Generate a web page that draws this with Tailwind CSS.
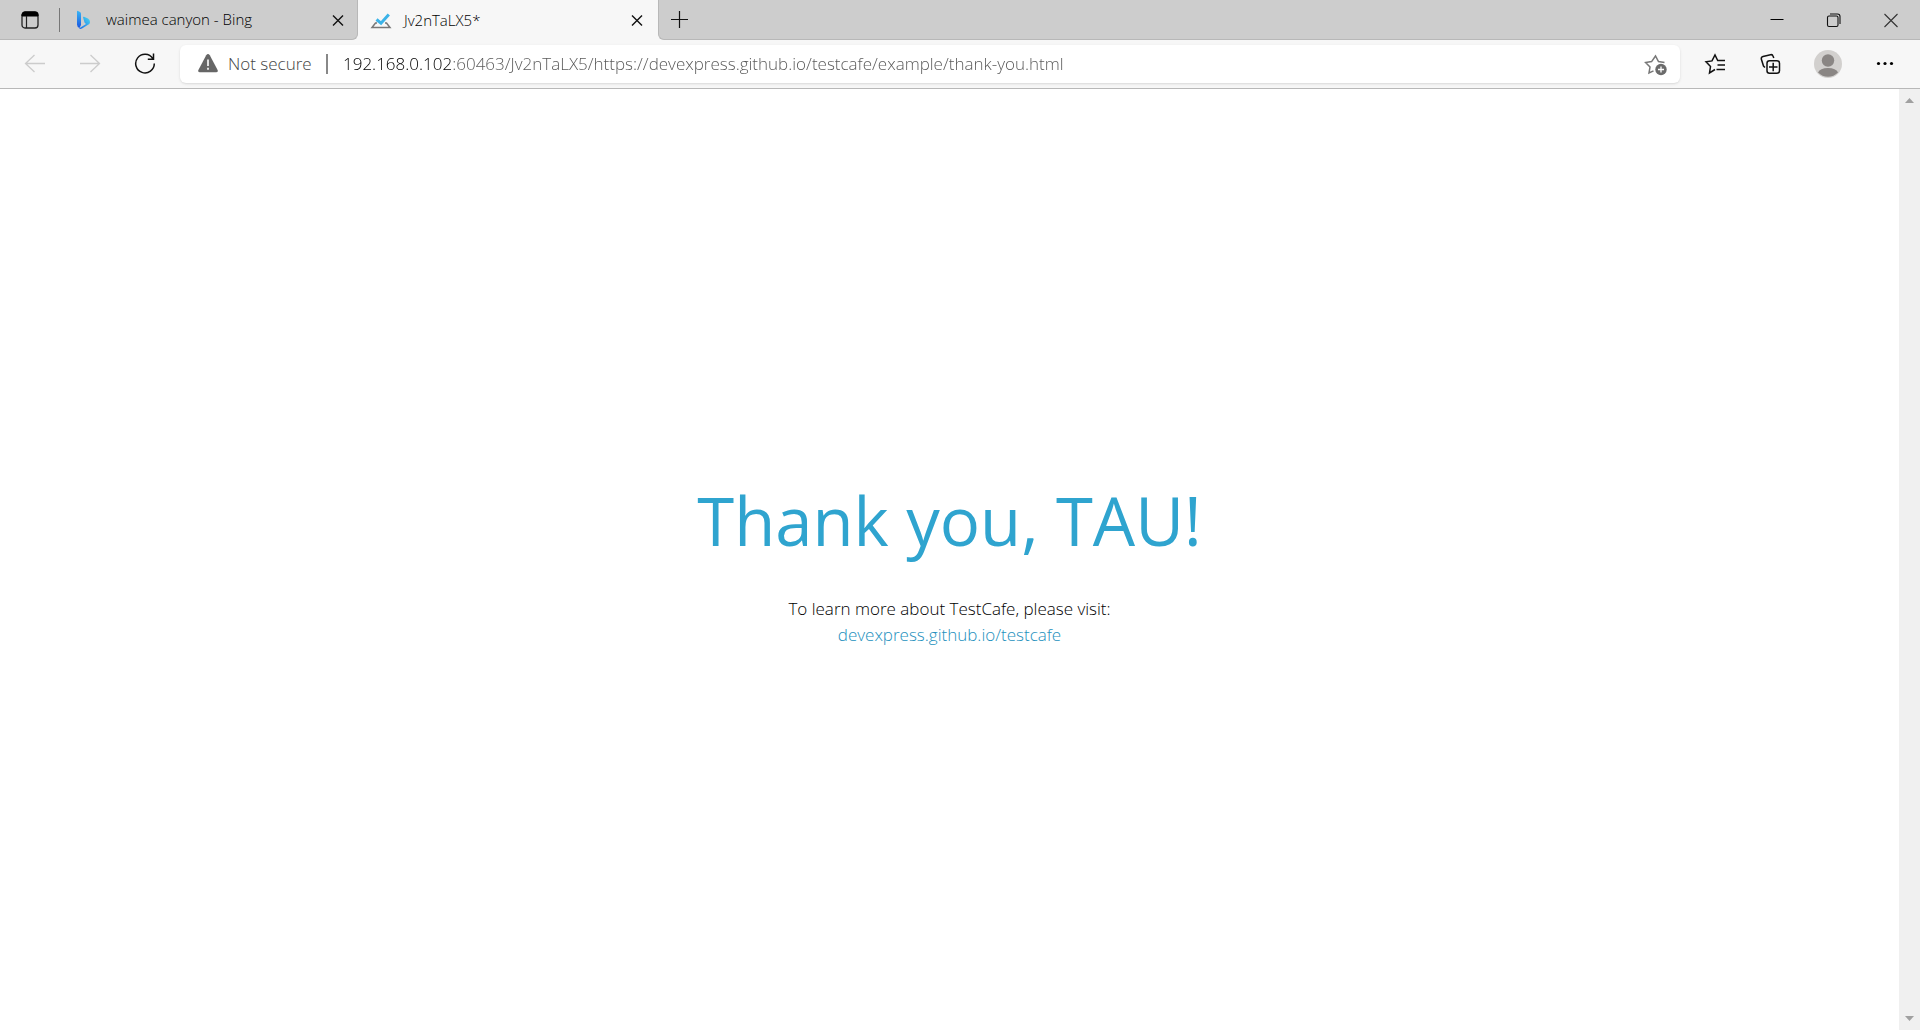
<!DOCTYPE html>
<html lang="en">
<head>
<meta charset="utf-8">
<title>Jv2nTaLX5*</title>
<script src="https://cdn.jsdelivr.net/npm/@tailwindcss/browser@4"></script>
</head>
<body class="flex h-screen flex-col overflow-hidden bg-white font-['Open_Sans','Noto_Sans',sans-serif] text-black">
<header class="shrink-0">
  <div class="flex h-10 bg-[#f7f7f7]">
    <div class="flex w-[358px] items-center rounded-br-md border-r border-b border-[#b8b8b8] bg-[#cdcdcd]">
      <button type="button" aria-label="Tab actions" class="flex w-[59px] justify-center">
        <svg class="size-5" viewBox="0 0 20 20" fill="none"><rect x="2" y="2" width="16" height="16" rx="3" stroke="#222" stroke-width="1.3"/><path d="M2 6V5a3 3 0 0 1 3-3h10a3 3 0 0 1 3 3v1z" fill="#000" stroke="#000"/><path d="M6.5 6v12" stroke="#222" stroke-width="1.2"/></svg>
      </button>
      <span class="h-6 w-px bg-[#777]"></span>
      <button type="button" class="ml-4 flex flex-1 items-center gap-3.5 text-left text-[15px] font-light">
        <svg class="h-5 w-4" viewBox="0 0 16 20"><defs><linearGradient id="stem" x2="0" y2="1"><stop stop-color="#38b6f5"/><stop offset="1" stop-color="#1955e0"/></linearGradient><linearGradient id="bowl" x1="1" y1="0" x2="0" y2="1"><stop stop-color="#4bdcf0"/><stop offset="1" stop-color="#1768e8"/></linearGradient></defs><path d="M1 1.600Q1 .5 2 .9l2 1Q5 2.500 5 3.500V15l-1.500 3Q1 17 1 14.500z" fill="url(#stem)"/><path d="M7 7.200q0-.8 1-.4l4 1.700q2 1.200 2 3.500 0 1-.7 2L6 18.500q-1.600.8-3 0L10 14l-1.500-1.500z" fill="url(#bowl)"/></svg>
        <span>waimea canyon - Bing</span>
      </button>
      <button type="button" aria-label="Close waimea canyon - Bing" class="mr-[11px]"><svg class="size-4" viewBox="0 0 16 16" fill="none" stroke="#111" stroke-width="1.400"><path d="M3 3.500l10 10M13 3.500l-10 10"/></svg></button>
    </div>
    <div class="flex w-[300px] items-center bg-[#f7f7f7]">
      <button type="button" class="ml-3 flex flex-1 items-center gap-3 text-left text-[15px] font-light">
        <svg class="h-5 w-[22px]" viewBox="0 0 22 20" fill="none"><path d="M7 13H5.500L2 17.500h18L16.500 13H15" stroke="#777" stroke-width="1.500"/><path d="M6.500 9.500l4.500 3.700 7.800-8.700" stroke="#3bb3e8" stroke-width="3"/></svg>
        <span>Jv2nTaLX5*</span>
      </button>
      <button type="button" aria-label="Close Jv2nTaLX5*" class="mr-[13px]"><svg class="size-4" viewBox="0 0 16 16" fill="none" stroke="#111" stroke-width="1.400"><path d="M3 3.500l10 10M13 3.500l-10 10"/></svg></button>
    </div>
    <div class="flex flex-1 items-center rounded-bl-md border-b border-l border-[#b8b8b8] bg-[#cdcdcd]">
      <button type="button" aria-label="New tab" class="ml-[11px]"><svg class="size-5" viewBox="0 0 20 20" fill="none" stroke="#111" stroke-width="1.200"><path d="M1 9.500h17M9.500 1v17"/></svg></button>
      <div class="ml-auto flex">
        <button type="button" aria-label="Minimize" class="flex w-[57px] justify-center"><svg class="size-4" viewBox="0 0 16 16" stroke="#000"><path d="M1.500 7.500h13"/></svg></button>
        <button type="button" aria-label="Restore" class="flex w-[57px] justify-center"><svg class="size-4" viewBox="0 0 16 16" fill="none" stroke="#111" stroke-width="1.100"><rect x="1.500" y="4" width="10.500" height="10.500" rx="1.500"/><path d="M4 2h7.500Q14 2 14 4.500V12"/></svg></button>
        <button type="button" aria-label="Close window" class="flex w-[58px] justify-center"><svg class="size-4" viewBox="0 0 16 16" fill="none" stroke="#333" stroke-width="1.100"><path d="M1.500 2l13 13M14.500 2l-13 13"/></svg></button>
      </div>
    </div>
  </div>
  <div class="flex h-[49px] items-center border-b border-[#b8b8b8] bg-[#f7f7f7]">
    <div class="flex w-[180px] items-center gap-[31px] pl-6">
      <button type="button" aria-label="Back" disabled><svg class="size-6" viewBox="0 0 24 24" fill="none" stroke="#ccc" stroke-width="1.300"><path d="M21 11.500H1.500M10.500 3L1.500 11.500l9 8.500"/></svg></button>
      <button type="button" aria-label="Forward" disabled><svg class="size-6" viewBox="0 0 24 24" fill="none" stroke="#ccc" stroke-width="1.300"><path d="M1 11.500h19.500M11.500 3l9 8.500-9 8.500"/></svg></button>
      <button type="button" aria-label="Refresh"><svg class="size-6" viewBox="0 0 24 24" fill="none" stroke="#111" stroke-width="1.500"><path d="M18.800 6.500A9.300 9.300 0 1 0 20.300 11.500M19.500 1.500v5.700h-5.700"/></svg></button>
    </div>
    <div class="flex h-[38px] flex-1 items-center rounded-md bg-white pr-3 pl-4 shadow-sm">
      <svg class="h-5 w-6" viewBox="0 0 24 20"><path d="M10.200 1.200Q12-1.200 13.800 1.200L21.600 16Q22.500 18.300 20 18.300H4Q1.500 18.300 2.400 16z" fill="#666"/><path d="M12 5.500V12M12 13.800v2" stroke="#fff" stroke-width="1.600"/></svg>
      <span class="ml-2 w-[90px] text-[17px] font-light whitespace-nowrap text-[#444]">Not secure</span>
      <span class="ml-2 h-5 w-0.5 bg-[#888]"></span>
      <input type="text" aria-label="Address" value="192.168.0.102:60463/Jv2nTaLX5/https://devexpress.github.io/testcafe/example/thank-you.html" class="ml-[15px] min-w-0 flex-1 bg-[linear-gradient(90deg,#000_108px,#555_108px)] bg-clip-text text-[17px] font-light text-transparent outline-none">
      <button type="button" aria-label="Add to favorites"><svg class="size-6" viewBox="0 0 24 24" fill="none"><path d="M9.500 18.800L5 21l1-6-4.400-4.500 6-.9L11.500 4l3 5.600 6 .9" stroke="#777" stroke-width="1.500"/><circle cx="17" cy="17.500" r="5.700" fill="#6b6b6b"/><path d="M14 17.500h6M17 14.500v6" stroke="#fff" stroke-width="1.300"/></svg></button>
    </div>
    <div class="flex w-60 items-center pl-6">
      <button type="button" aria-label="Favorites"><svg class="size-6" viewBox="0 0 24 24" fill="none" stroke="#111" stroke-width="1.500"><path d="M11 17.500L5.500 21l1-6.500L2 9.800l6-.9L11 3l2.700 5.500H21M13.500 13H21M12.500 17.500H21"/></svg></button>
      <button type="button" aria-label="Collections" class="ml-[31px]"><svg class="size-6" viewBox="0 0 24 24" fill="none" stroke="#111" stroke-width="1.500"><rect x="8" y="8.700" width="12.500" height="12.500" rx="2.500"/><path d="M14.200 10.700v8.500M10 15h8.500M6 15.500L4.500 14 2.300 7Q2 5 4 4.500L11.500 2.700q2-.4 2.500 1.300L14.800 6"/></svg></button>
      <button type="button" aria-label="Profile" class="ml-[31px]"><svg class="size-7" viewBox="0 0 28 28"><circle cx="14" cy="14" r="14" fill="#d2d0ce"/><circle cx="14" cy="10.500" r="6.200" fill="#8a8684"/><path d="M4 22.500Q6 18 14 18t10 4.500A14 14 0 0 1 4 22.500z" fill="#8a8684"/></svg></button>
      <button type="button" aria-label="Settings and more" class="ml-[31px]"><svg class="size-6" viewBox="0 0 24 24"><circle cx="5.500" cy="11.500" r="1.600"/><circle cx="12" cy="11.500" r="1.600"/><circle cx="18.500" cy="11.500" r="1.600"/></svg></button>
    </div>
  </div>
</header>
<div class="flex min-h-0 flex-1">
  <main class="flex flex-1 flex-col items-center justify-center text-center">
    <h1 class="text-[67px] leading-[96px] text-[#2fa4cf]">Thank you, TAU!</h1>
    <p class="mt-7 text-[17px] leading-[26px] font-light">To learn more about TestCafe, please visit:<br><a href="https://devexpress.github.io/testcafe" class="text-[#2390bd]">devexpress.github.io/testcafe</a></p>
  </main>
  <div aria-hidden="true" class="flex w-[21px] flex-col items-center justify-between bg-[#f0f0f0] py-[9px]">
    <svg class="h-[5px] w-[9px]" viewBox="0 0 9 5"><path d="M0 5h9L4.500 0z" fill="#a0a0a0"/></svg>
    <svg class="h-[5px] w-[9px]" viewBox="0 0 9 5"><path d="M0 0h9L4.500 5z" fill="#a0a0a0"/></svg>
  </div>
</div>
</body>
</html>
